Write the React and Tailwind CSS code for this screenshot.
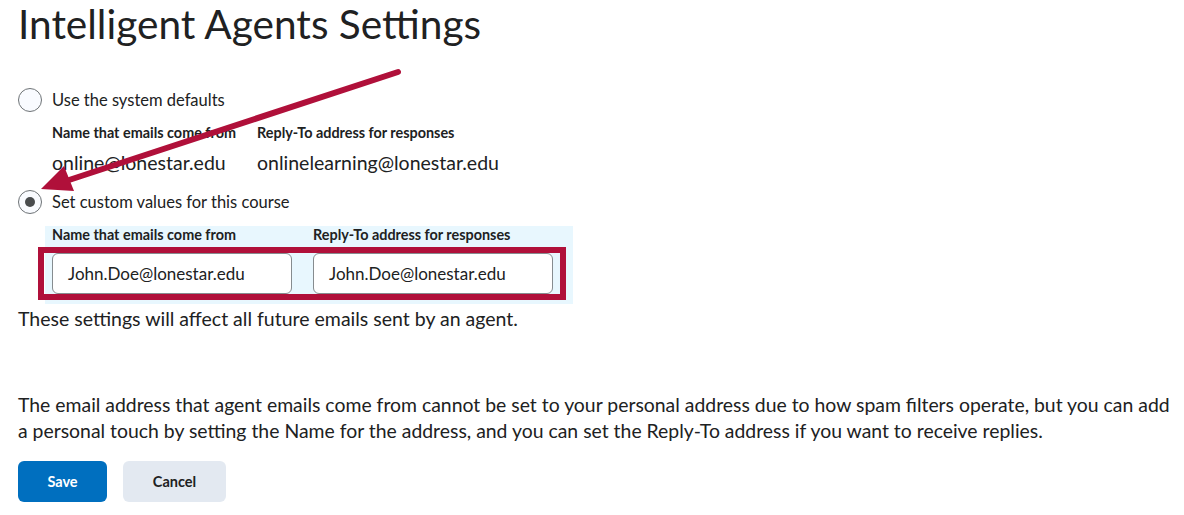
import React from "react";

const font = { fontFamily: "Lato, 'Noto Sans', sans-serif" };

function Radio({ checked, label }) {
  return (
    <div className="flex items-center h-6">
      <span className="w-6 h-6 rounded-full border border-[#6e7376] bg-[#f9fbff] flex items-center justify-center shrink-0">
        {checked && <span className="w-[10px] h-[10px] rounded-full bg-[#494c4e]" />}
      </span>
      <span className="ml-[10px] text-[16.5px] text-[#202122]">{label}</span>
    </div>
  );
}

function Field({ value }) {
  return (
    <div className="w-[240px] h-[41px] rounded-[6px] border border-[#868c8f] bg-white flex items-center pl-[15px] text-[17px] text-[#202122]">
      {value}
    </div>
  );
}

export default function App() {
  return (
    <div className="relative w-[1184px] h-[515px] bg-white overflow-hidden px-[18px] text-[#202122]" style={font}>
      <h1 className="text-[40.6px] leading-[48px] font-normal text-[#202122]">Intelligent Agents Settings</h1>

      <div className="mt-[40px]">
        <Radio label="Use the system defaults" />
      </div>

      <div className="ml-[34px] mt-[11px] grid grid-cols-[205px_1fr] text-[14.4px] leading-[20px] font-bold">
        <span>Name that emails come from</span>
        <span>Reply-To address for responses</span>
      </div>
      <div className="ml-[34px] mt-[7px] grid grid-cols-[205px_1fr] text-[19.5px] leading-[26px]">
        <span>online@lonestar.edu</span>
        <span>onlinelearning@lonestar.edu</span>
      </div>

      <div className="mt-[14px]">
        <Radio checked label="Set custom values for this course" />
      </div>

      <div className="mt-[12px] ml-[27px] w-[528px] bg-[#e8f7fe] pb-[4px]">
        <div className="pl-[7px] grid grid-cols-[261px_1fr] text-[14.4px] leading-[18px] font-bold">
          <span>Name that emails come from</span>
          <span>Reply-To address for responses</span>
        </div>
        <div className="mt-[3px] -ml-[7px] w-[528px] border-[6px] border-[#b0103a] flex gap-[21px] pl-[8px]">
          <Field value="John.Doe@lonestar.edu" />
          <Field value="John.Doe@lonestar.edu" />
        </div>
      </div>

      <p className="mt-[2px] text-[19.5px] leading-[26px]">These settings will affect all future emails sent by an agent.</p>

      <p className="mt-[60px] text-[19.4px] leading-[26px] whitespace-nowrap">
        The email address that agent emails come from cannot be set to your personal address due to how spam filters operate, but you can add
        <br />
        a personal touch by setting the Name for the address, and you can set the Reply-To address if you want to receive replies.
      </p>

      <div className="mt-[17px] flex gap-4">
        <button className="w-[89px] h-[41px] rounded-[6px] bg-[#006fbf] text-white text-[14.5px] font-bold">Save</button>
        <button className="w-[103px] h-[41px] rounded-[6px] bg-[#e3e9f1] text-[#202122] text-[14.5px] font-bold">Cancel</button>
      </div>

      <svg className="absolute left-0 top-0 pointer-events-none" width="1184" height="515">
        <line x1="398" y1="72" x2="66" y2="181" stroke="#b0103a" strokeWidth="6" strokeLinecap="round" />
        <polygon points="41,189 74,191 64,166" fill="#b0103a" />
      </svg>
    </div>
  );
}
